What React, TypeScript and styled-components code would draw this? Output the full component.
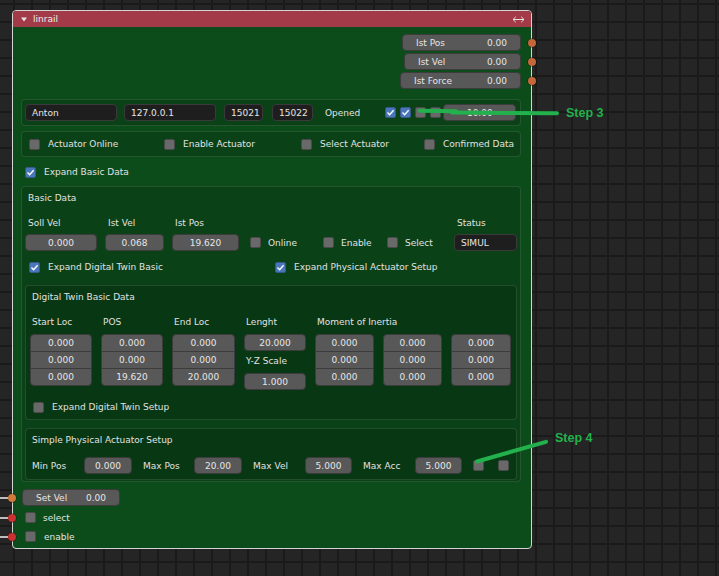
import React from "react";
import styled, { createGlobalStyle } from "styled-components";

const Global = createGlobalStyle`
  html, body { margin: 0; padding: 0; }
  body {
    background-color: #252525;
    background-image:
      linear-gradient(to right, #1a1a1a 0 2px, transparent 2px),
      linear-gradient(to bottom, #1a1a1a 0 2px, transparent 2px);
    background-size: 18px 18px;
    background-position: 13px 3px;
    font-family: "DejaVu Sans", "Noto Sans", sans-serif;
    font-size: 9px;
    color: #e2e2e2;
  }
`;

const Canvas = styled.div`
  position: relative;
  width: 719px;
  height: 576px;
  overflow: hidden;
`;

const Node = styled.div`
  position: absolute;
  left: 12px;
  top: 10px;
  width: 520px;
  height: 539px;
  box-sizing: border-box;
  border: 1px solid #d4d4d4;
  border-radius: 4px;
  background: #0c4c1b;
  display: flex;
  flex-direction: column;
`;

const Header = styled.div`
  height: 16px;
  flex: none;
  background: #a33a47;
  border-radius: 3px 3px 0 0;
  display: flex;
  align-items: center;
  padding: 0 6px 0 8px;
  color: #ececec;
`;

const Collapse = styled.svg`
  width: 6px;
  height: 5px;
  margin-right: 6px;
`;

const Title = styled.span`
  flex: 1;
  font-size: 9px;
`;

const HeaderIcon = styled.svg`
  width: 13px;
  height: 7px;
`;

const Body = styled.div`
  flex: 1;
  display: flex;
  flex-direction: column;
  padding: 7px 10px 0 8px;
`;

const Outputs = styled.div`
  display: flex;
  flex-direction: column;
  align-items: flex-end;
  gap: 2px;
`;

const OutputRow = styled.div`
  position: relative;
`;

const Socket = styled.span<{ $color: string; $side: "left" | "right"; $offset: number }>`
  position: absolute;
  top: 50%;
  ${(p) => p.$side}: ${(p) => p.$offset}px;
  width: 8px;
  height: 8px;
  margin-top: -4px;
  border-radius: 50%;
  background: ${(p) => p.$color};
  box-shadow: 0 0 0 0.5px rgba(0, 0, 0, 0.6);
  &::before {
    content: ${(p) => (p.$side === "left" ? '""' : "none")};
    position: absolute;
    right: 100%;
    top: 3px;
    width: 12px;
    height: 2px;
    background: #bdbdbd;
  }
`;

const NumField = styled.div<{ $w: number; $center?: boolean; $ml?: number }>`
  box-sizing: border-box;
  width: ${(p) => p.$w}px;
  height: 17px;
  flex: none;
  margin-left: ${(p) => p.$ml ?? 0}px;
  display: flex;
  align-items: center;
  justify-content: ${(p) => (p.$center ? "center" : "space-between")};
  padding: 0 ${(p) => (p.$center ? 2 : 13)}px;
  background: #585858;
  border: 1px solid #3c3c3c;
  border-radius: 4px;
  color: #e6e6e6;
  white-space: nowrap;
`;

const TextField = styled.div<{ $w: number; $ml?: number }>`
  box-sizing: border-box;
  width: ${(p) => p.$w}px;
  height: 17px;
  flex: none;
  margin-left: ${(p) => p.$ml ?? 0}px;
  display: flex;
  align-items: center;
  padding: 0 6px;
  background: #1e1e1e;
  border: 1px solid #3a3a3a;
  border-radius: 4px;
  color: #e6e6e6;
  white-space: nowrap;
`;

const Box = styled.div`
  box-sizing: border-box;
  border: 1px solid rgba(255, 255, 255, 0.11);
  border-radius: 4px;
  background: rgba(0, 0, 0, 0.14);
`;

const ConnBox = styled(Box)`
  margin-top: 10px;
  height: 27px;
  display: flex;
  align-items: center;
  padding: 0 3px;
`;

const FlagBox = styled(Box)`
  margin-top: 5px;
  height: 26px;
  display: grid;
  grid-template-columns: 135px 137px 123px auto;
  align-items: center;
  padding: 0 7px;
`;

const SectionBox = styled(Box)`
  margin-top: 6px;
  padding: 0 3px 1px;
  display: flex;
  flex-direction: column;
`;

const SubBox = styled(Box)<{ $mt: number; $pb: number }>`
  margin-top: ${(p) => p.$mt}px;
  padding: 0 4px ${(p) => p.$pb}px;
  display: flex;
  flex-direction: column;
`;

const BoxTitle = styled.div<{ $indent: number }>`
  height: 16px;
  margin-top: 3px;
  padding-left: ${(p) => p.$indent}px;
  display: flex;
  align-items: center;
`;

const CheckBox = styled.span<{ $on?: boolean }>`
  box-sizing: border-box;
  width: 11px;
  height: 11px;
  flex: none;
  border-radius: 2px;
  background: ${(p) => (p.$on ? "#4a76ba" : "#696969")};
  border: 1px solid ${(p) => (p.$on ? "#38598c" : "#4a4a4a")};
  display: inline-flex;
  align-items: center;
  justify-content: center;
`;

const CheckMark = styled.svg`
  width: 9px;
  height: 9px;
`;

const CheckItem = styled.div<{ $w?: number; $gap?: number }>`
  display: flex;
  align-items: center;
  gap: ${(p) => p.$gap ?? 7}px;
  height: 16px;
  flex: none;
  width: ${(p) => (p.$w ? `${p.$w}px` : "auto")};
  white-space: nowrap;
`;

const Check = ({ on }: { on?: boolean }) => (
  <CheckBox $on={on}>
    {on && (
      <CheckMark viewBox="0 0 9 9">
        <polyline points="1.5,4.6 3.6,6.7 7.6,2.2" fill="none" stroke="#ffffff" strokeWidth="1.4" />
      </CheckMark>
    )}
  </CheckBox>
);

const ChecksGroup = styled.div<{ $ml: number; $gap: number }>`
  display: flex;
  align-items: center;
  margin-left: ${(p) => p.$ml}px;
  gap: ${(p) => p.$gap}px;
`;

const Plain = styled.span<{ $ml?: number }>`
  margin-left: ${(p) => p.$ml ?? 0}px;
  white-space: nowrap;
`;

const ExpandRow = styled.div<{ $mt: number; $indent: number }>`
  margin-top: ${(p) => p.$mt}px;
  padding-left: ${(p) => p.$indent}px;
  height: 16px;
  display: flex;
  align-items: center;
`;

const BasicRow = styled.div`
  margin-top: 9px;
  display: flex;
  align-items: flex-end;
`;

const FieldCol = styled.div<{ $ml?: number }>`
  display: flex;
  flex-direction: column;
  margin-left: ${(p) => p.$ml ?? 0}px;
`;

const InlineCheckCol = styled(FieldCol)`
  height: 17px;
  justify-content: center;
`;

const ColLabel = styled.div<{ $mb: number; $pl: number }>`
  height: 16px;
  display: flex;
  align-items: center;
  padding-left: ${(p) => p.$pl}px;
  margin-bottom: ${(p) => p.$mb}px;
  white-space: nowrap;
`;

const VecGrid = styled.div`
  margin-top: 9px;
  display: grid;
  grid-template-columns: 62px 62px 63px 62px 59px 59px 60px;
  column-gap: 9px;
  align-items: start;
`;

const Stack = styled.div`
  display: flex;
  flex-direction: column;
  & > div {
    height: 18px;
    border-radius: 0;
  }
  & > div + div {
    margin-top: -1px;
  }
  & > div:first-child {
    border-radius: 4px 4px 0 0;
  }
  & > div:last-child {
    border-radius: 0 0 4px 4px;
  }
`;

const SubLabel = styled.div`
  height: 16px;
  margin: 2px 0 4px;
  padding-left: 2px;
  display: flex;
  align-items: center;
  white-space: nowrap;
`;

const ParamRow = styled.div`
  margin-top: 9px;
  margin-bottom: 5px;
  padding-left: 2px;
  display: flex;
  align-items: center;
  gap: 11px;
`;

const ParamPair = styled.div`
  display: flex;
  align-items: center;
`;

const ParamLabel = styled.span<{ $w: number }>`
  width: ${(p) => p.$w}px;
  white-space: nowrap;
`;

const InputRow = styled.div<{ $mt: number; $indent: number }>`
  position: relative;
  margin-top: ${(p) => p.$mt}px;
  padding-left: ${(p) => p.$indent}px;
  height: 17px;
  display: flex;
  align-items: center;
`;

const Overlay = styled.svg`
  position: absolute;
  left: 0;
  top: 0;
  width: 719px;
  height: 576px;
  pointer-events: none;
`;

const StepText = styled.span<{ $x: number; $y: number }>`
  position: absolute;
  left: ${(p) => p.$x}px;
  top: ${(p) => p.$y}px;
  font-family: "Liberation Sans", Arial, sans-serif;
  font-weight: bold;
  font-size: 12.5px;
  line-height: 14px;
  color: #22b14c;
  white-space: nowrap;
`;

const outputs = [
  { label: "Ist Pos", value: "0.00", w: 119 },
  { label: "Ist Vel", value: "0.00", w: 117 },
  { label: "Ist Force", value: "0.00", w: 121 },
];

const vecCols = [
  { label: "Start Loc", values: ["0.000", "0.000", "0.000"] },
  { label: "POS", values: ["0.000", "0.000", "19.620"] },
  { label: "End Loc", values: ["0.000", "0.000", "20.000"] },
];

const inertia = [
  ["0.000", "0.000", "0.000"],
  ["0.000", "0.000", "0.000"],
  ["0.000", "0.000", "0.000"],
];

const params = [
  { label: "Min Pos", lw: 52, value: "0.000", fw: 48 },
  { label: "Max Pos", lw: 51, value: "20.00", fw: 48 },
  { label: "Max Vel", lw: 52, value: "5.000", fw: 47 },
  { label: "Max Acc", lw: 52, value: "5.000", fw: 47 },
];

export default function App() {
  return (
    <>
      <Global />
      <Canvas>
        <Node>
          <Header>
            <Collapse viewBox="0 0 6 5">
              <path d="M0 0.5 H6 L3 4.5 Z" fill="#e6e6e6" />
            </Collapse>
            <Title>linrail</Title>
            <HeaderIcon viewBox="0 0 13 7">
              <line x1="1" y1="3.5" x2="12" y2="3.5" stroke="#e2e2e2" strokeWidth="1" />
              <polyline points="3.8,0.8 1,3.5 3.8,6.2" fill="none" stroke="#e2e2e2" strokeWidth="1" />
              <polyline points="9.2,0.8 12,3.5 9.2,6.2" fill="none" stroke="#e2e2e2" strokeWidth="1" />
            </HeaderIcon>
          </Header>
          <Body>
            <Outputs>
              {outputs.map((o) => (
                <OutputRow key={o.label}>
                  <NumField $w={o.w}>
                    <span>{o.label}</span>
                    <span>{o.value}</span>
                  </NumField>
                  <Socket $color="#c4683b" $side="right" $offset={-15} />
                </OutputRow>
              ))}
            </Outputs>

            <ConnBox>
              <TextField $w={92}>Anton</TextField>
              <TextField $w={92} $ml={7}>127.0.0.1</TextField>
              <TextField $w={39} $ml={8}>15021</TextField>
              <TextField $w={41} $ml={9}>15022</TextField>
              <Plain $ml={12}>Opened</Plain>
              <ChecksGroup $ml={25} $gap={4}>
                <Check on />
                <Check on />
                <Check />
                <Check />
              </ChecksGroup>
              <NumField $w={73} $ml={2} $center>
                10.00
              </NumField>
            </ConnBox>

            <FlagBox>
              <CheckItem $gap={8}>
                <Check />
                Actuator Online
              </CheckItem>
              <CheckItem $gap={8}>
                <Check />
                Enable Actuator
              </CheckItem>
              <CheckItem $gap={8}>
                <Check />
                Select Actuator
              </CheckItem>
              <CheckItem $gap={8}>
                <Check />
                Confirmed Data
              </CheckItem>
            </FlagBox>

            <ExpandRow $mt={7} $indent={4}>
              <CheckItem $gap={8}>
                <Check on />
                Expand Basic Data
              </CheckItem>
            </ExpandRow>

            <SectionBox>
              <BoxTitle $indent={3}>Basic Data</BoxTitle>
              <BasicRow>
                <FieldCol>
                  <ColLabel $mb={3} $pl={3}>Soll Vel</ColLabel>
                  <NumField $w={72} $center>0.000</NumField>
                </FieldCol>
                <FieldCol $ml={8}>
                  <ColLabel $mb={3} $pl={3}>Ist Vel</ColLabel>
                  <NumField $w={59} $center>0.068</NumField>
                </FieldCol>
                <FieldCol $ml={8}>
                  <ColLabel $mb={3} $pl={3}>Ist Pos</ColLabel>
                  <NumField $w={67} $center>19.620</NumField>
                </FieldCol>
                <InlineCheckCol $ml={11}>
                  <CheckItem $w={73}>
                    <Check />
                    Online
                  </CheckItem>
                </InlineCheckCol>
                <InlineCheckCol>
                  <CheckItem $w={64}>
                    <Check />
                    Enable
                  </CheckItem>
                </InlineCheckCol>
                <InlineCheckCol>
                  <CheckItem $w={67}>
                    <Check />
                    Select
                  </CheckItem>
                </InlineCheckCol>
                <FieldCol>
                  <ColLabel $mb={3} $pl={3}>Status</ColLabel>
                  <TextField $w={63}>SIMUL</TextField>
                </FieldCol>
              </BasicRow>

              <ExpandRow $mt={8} $indent={4}>
                <CheckItem $w={246} $gap={8}>
                  <Check on />
                  Expand Digital Twin Basic
                </CheckItem>
                <CheckItem $gap={8}>
                  <Check on />
                  Expand Physical Actuator Setup
                </CheckItem>
              </ExpandRow>

              <SubBox $mt={10} $pb={4}>
                <BoxTitle $indent={2}>Digital Twin Basic Data</BoxTitle>
                <VecGrid>
                  {vecCols.map((c) => (
                    <FieldCol key={c.label}>
                      <ColLabel $mb={4} $pl={2}>{c.label}</ColLabel>
                      <Stack>
                        {c.values.map((v, i) => (
                          <NumField key={i} $w={c.label === "End Loc" ? 63 : 62} $center>
                            {v}
                          </NumField>
                        ))}
                      </Stack>
                    </FieldCol>
                  ))}
                  <FieldCol>
                    <ColLabel $mb={4} $pl={2}>Lenght</ColLabel>
                    <NumField $w={62} $center>20.000</NumField>
                    <SubLabel>Y-Z Scale</SubLabel>
                    <NumField $w={62} $center>1.000</NumField>
                  </FieldCol>
                  {inertia.map((col, ci) => (
                    <FieldCol key={ci}>
                      <ColLabel $mb={4} $pl={2}>{ci === 0 ? "Moment of Inertia" : "\u00a0"}</ColLabel>
                      <Stack>
                        {col.map((v, i) => (
                          <NumField key={i} $w={ci === 2 ? 60 : 59} $center>
                            {v}
                          </NumField>
                        ))}
                      </Stack>
                    </FieldCol>
                  ))}
                </VecGrid>
                <ExpandRow $mt={9} $indent={3}>
                  <CheckItem $gap={8}>
                    <Check />
                    Expand Digital Twin Setup
                  </CheckItem>
                </ExpandRow>
              </SubBox>

              <SubBox $mt={8} $pb={0}>
                <BoxTitle $indent={2}>Simple Physical Actuator Setup</BoxTitle>
                <ParamRow>
                  {params.map((p) => (
                    <ParamPair key={p.label}>
                      <ParamLabel $w={p.lw}>{p.label}</ParamLabel>
                      <NumField $w={p.fw} $center>{p.value}</NumField>
                    </ParamPair>
                  ))}
                  <ChecksGroup $ml={0} $gap={14}>
                    <Check />
                    <Check />
                  </ChecksGroup>
                </ParamRow>
              </SubBox>
            </SectionBox>

            <InputRow $mt={7} $indent={1}>
              <Socket $color="#cf7a3c" $side="left" $offset={-13} />
              <NumField $w={98}>
                <span>Set Vel</span>
                <span>0.00</span>
              </NumField>
            </InputRow>
            <InputRow $mt={3} $indent={4}>
              <Socket $color="#c83232" $side="left" $offset={-13} />
              <CheckItem $gap={7}>
                <Check />
                select
              </CheckItem>
            </InputRow>
            <InputRow $mt={2} $indent={4}>
              <Socket $color="#c83232" $side="left" $offset={-13} />
              <CheckItem $gap={8}>
                <Check />
                enable
              </CheckItem>
            </InputRow>
          </Body>
        </Node>

        <Overlay viewBox="0 0 719 576">
          <line x1="420" y1="110.8" x2="456" y2="111.2" stroke="#22b14c" strokeWidth="4" strokeLinecap="round" />
          <line x1="452" y1="112.6" x2="557" y2="113.2" stroke="#22b14c" strokeWidth="4" strokeLinecap="round" />
          <line x1="477" y1="461.5" x2="546" y2="441.8" stroke="#22b14c" strokeWidth="4" strokeLinecap="round" />
        </Overlay>
        <StepText $x={566} $y={106}>Step 3</StepText>
        <StepText $x={555} $y={431}>Step 4</StepText>
      </Canvas>
    </>
  );
}
